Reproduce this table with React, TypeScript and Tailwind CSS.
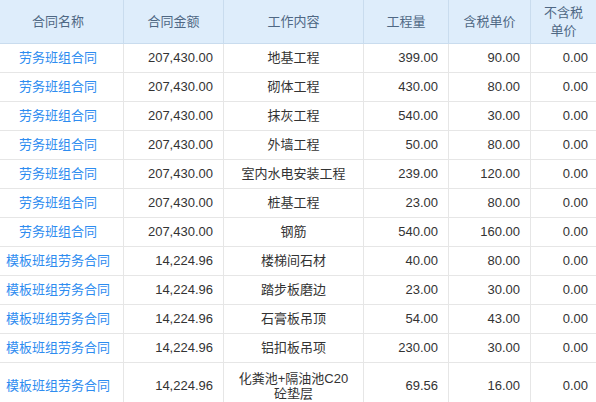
import React from 'react';

type Row = {
  name: string;
  amount: string;
  work: string;
  qty: string;
  price: string;
  noTax: string;
};

const rows: Row[] = [
  { name: '劳务班组合同', amount: '207,430.00', work: '地基工程', qty: '399.00', price: '90.00', noTax: '0.00' },
  { name: '劳务班组合同', amount: '207,430.00', work: '砌体工程', qty: '430.00', price: '80.00', noTax: '0.00' },
  { name: '劳务班组合同', amount: '207,430.00', work: '抹灰工程', qty: '540.00', price: '30.00', noTax: '0.00' },
  { name: '劳务班组合同', amount: '207,430.00', work: '外墙工程', qty: '50.00', price: '80.00', noTax: '0.00' },
  { name: '劳务班组合同', amount: '207,430.00', work: '室内水电安装工程', qty: '239.00', price: '120.00', noTax: '0.00' },
  { name: '劳务班组合同', amount: '207,430.00', work: '桩基工程', qty: '23.00', price: '80.00', noTax: '0.00' },
  { name: '劳务班组合同', amount: '207,430.00', work: '钢筋', qty: '540.00', price: '160.00', noTax: '0.00' },
  { name: '模板班组劳务合同', amount: '14,224.96', work: '楼梯间石材', qty: '40.00', price: '80.00', noTax: '0.00' },
  { name: '模板班组劳务合同', amount: '14,224.96', work: '踏步板磨边', qty: '23.00', price: '30.00', noTax: '0.00' },
  { name: '模板班组劳务合同', amount: '14,224.96', work: '石膏板吊顶', qty: '54.00', price: '43.00', noTax: '0.00' },
  { name: '模板班组劳务合同', amount: '14,224.96', work: '铝扣板吊项', qty: '230.00', price: '30.00', noTax: '0.00' },
  { name: '模板班组劳务合同', amount: '14,224.96', work: '化粪池+隔油池C20砼垫层', qty: '69.56', price: '16.00', noTax: '0.00' },
];

const font = { fontFamily: '"Liberation Sans", "Noto Sans CJK SC", sans-serif' };

export default function App() {
  return (
    <div className="w-[596px] h-[402px] overflow-hidden bg-white text-[13px]" style={font}>
      {/* Header */}
      <div className="flex h-[44px] bg-[#deedfb] border-b border-[#c9dcee] text-[#4f6884] leading-[18px]">
        <div className="w-[124px] shrink-0 flex items-center justify-center pr-[7px] border-r border-[#c9dcee]">合同名称</div>
        <div className="w-[100px] shrink-0 flex items-center justify-center border-r border-[#c9dcee]">合同金额</div>
        <div className="w-[140px] shrink-0 flex items-center justify-center border-r border-[#c9dcee]">工作内容</div>
        <div className="w-[85px] shrink-0 flex items-center justify-center border-r border-[#c9dcee]">工程量</div>
        <div className="w-[82px] shrink-0 flex items-center justify-center border-r border-[#c9dcee]">含税单价</div>
        <div className="w-[67px] shrink-0 flex items-center justify-center text-center pr-[2px]">
          不含税
          <br />
          单价
        </div>
      </div>

      {/* Body */}
      {rows.map((r, i) => {
        const last = i === rows.length - 1;
        return (
          <div
            key={i}
            className={`flex border-b border-[#e6e6e6] text-[#333] ${last ? 'h-[46px] leading-[15px]' : 'h-[29px] leading-[16px]'}`}
          >
            <div className="w-[124px] shrink-0 flex items-center justify-center pr-[7px] border-r border-[#e6e6e6] text-[#2d8cf0]">
              {r.name}
            </div>
            <div className="w-[100px] shrink-0 flex items-center justify-end pr-[10px] border-r border-[#e6e6e6]">
              {r.amount}
            </div>
            <div className="w-[140px] shrink-0 flex items-center justify-center text-center px-[10px] border-r border-[#e6e6e6]">
              {r.work}
            </div>
            <div className="w-[85px] shrink-0 flex items-center justify-end pr-[10px] border-r border-[#e6e6e6]">
              {r.qty}
            </div>
            <div className="w-[82px] shrink-0 flex items-center justify-end pr-[10px] border-r border-[#e6e6e6]">
              {r.price}
            </div>
            <div className="w-[67px] shrink-0 flex items-center justify-end pr-[10px]">{r.noTax}</div>
          </div>
        );
      })}
    </div>
  );
}
